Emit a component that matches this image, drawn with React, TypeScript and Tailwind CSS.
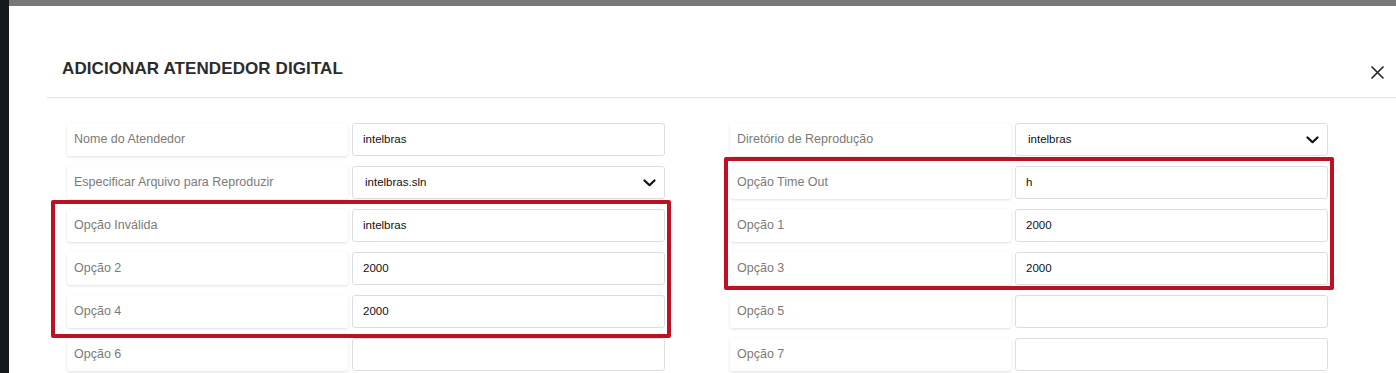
import React from "react";

type Field = { label: string; value: string; select?: boolean };

const leftFields: Field[] = [
  { label: "Nome do Atendedor", value: "intelbras" },
  { label: "Especificar Arquivo para Reproduzir", value: "intelbras.sln", select: true },
  { label: "Opção Inválida", value: "intelbras" },
  { label: "Opção 2", value: "2000" },
  { label: "Opção 4", value: "2000" },
  { label: "Opção 6", value: "" },
];

const rightFields: Field[] = [
  { label: "Diretório de Reprodução", value: "intelbras", select: true },
  { label: "Opção Time Out", value: "h" },
  { label: "Opção 1", value: "2000" },
  { label: "Opção 3", value: "2000" },
  { label: "Opção 5", value: "" },
  { label: "Opção 7", value: "" },
];

function Chevron() {
  return (
    <svg width="13" height="8" viewBox="0 0 13 8" fill="none">
      <path d="M1.5 1.5L6.5 6.2L11.5 1.5" stroke="#111" strokeWidth="2.2" strokeLinecap="round" strokeLinejoin="round" />
    </svg>
  );
}

function FieldRow({ field }: { field: Field }) {
  return (
    <div className="flex h-[33px] gap-[4px]">
      <div className="flex w-[281px] items-center rounded-[3px] bg-white pl-[7px] text-[12.5px] text-[#7a7a7a] shadow-[0_1px_3px_rgba(0,0,0,0.13)]">
        {field.label}
      </div>
      <div
        className={`flex w-[313px] items-center justify-between rounded-[3px] border border-[#dcdde0] bg-white text-[11.5px] text-[#111] ${
          field.select ? "pl-[12px] pr-[8px]" : "pl-[10px]"
        }`}
      >
        <span>{field.value}</span>
        {field.select ? <Chevron /> : null}
      </div>
    </div>
  );
}

export default function App() {
  return (
    <div className="flex h-[373px] w-full overflow-hidden bg-[#16191c] font-['Liberation_Sans',Arial,sans-serif]">
      <div className="w-[9px] shrink-0 bg-[#16191c]" />
      <div className="flex min-w-0 flex-1 flex-col">
        <div className="h-[6px] shrink-0 bg-[#787878]" />
        <div className="relative flex-1 bg-white pl-[38px]">
          <div className="flex h-[92px] items-center justify-between border-b border-[#e2e2e2] pl-[15px] pr-[12px] pt-[34px]">
            <h1 className="text-[17px] font-bold tracking-[0.1px] text-[#2b2b2b]">ADICIONAR ATENDEDOR DIGITAL</h1>
            <svg width="13" height="13" viewBox="0 0 13 13" fill="none" className="mt-[8px]">
              <path d="M1 1L12 12M12 1L1 12" stroke="#2a2a2a" strokeWidth="1.7" strokeLinecap="round" />
            </svg>
          </div>

          <div className="flex gap-[65px] pl-[20px] pt-[25px]">
            <div className="flex flex-col gap-[10px]">
              {leftFields.map((field) => (
                <FieldRow key={field.label} field={field} />
              ))}
            </div>
            <div className="flex flex-col gap-[10px]">
              {rightFields.map((field) => (
                <FieldRow key={field.label} field={field} />
              ))}
            </div>
          </div>

          {/* destaques vermelhos */}
          <div className="pointer-events-none absolute left-[42px] top-[194px] h-[138px] w-[620px] rounded-[2px] border-[4px] border-[#bb1122]" />
          <div className="pointer-events-none absolute left-[715px] top-[151px] h-[133px] w-[610px] rounded-[2px] border-[4px] border-[#bb1122]" />
        </div>
      </div>
    </div>
  );
}
